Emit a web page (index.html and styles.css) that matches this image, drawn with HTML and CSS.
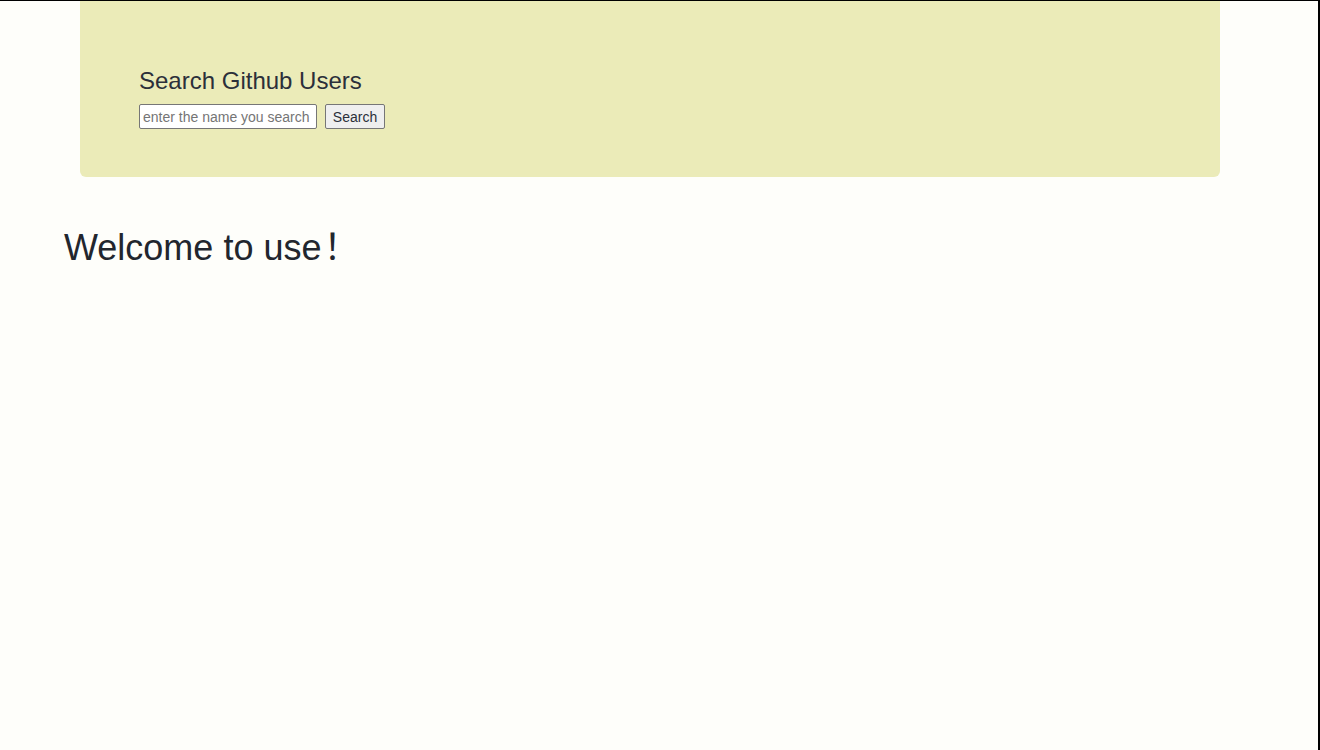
FILE: index.html
```html
<!DOCTYPE html>
<html>
<head>
<meta charset="utf-8">
<link rel="stylesheet" href="styles.css">
</head>
<body>
<div class="frame">
  <section class="jumbotron">
    <h3 class="title">Search Github Users</h3>
    <div class="search">
      <input class="search-input" type="text" placeholder="enter the name you search">
      <button class="search-btn">Search</button>
    </div>
  </section>
  <h1 class="welcome">Welcome to use<span class="bang">！</span></h1>
</div>
</body>
</html>
```
FILE: styles.css
```css
html, body {
  margin: 0;
  padding: 0;
  height: 100%;
}
body {
  background: #fefefa;
  font-family: "Liberation Sans", Arial, sans-serif;
  color: #333;
}
.frame {
  box-sizing: border-box;
  height: 750px;
  border-top: 1px solid #000;
  border-right: 2px solid #000;
}
.jumbotron {
  margin: 0 100px 0 80px;
  width: 1140px;
  box-sizing: border-box;
  background: #ebebb8;
  border-radius: 0 0 6px 6px;
  padding: 67px 60px 47px 59px;
  height: 176px;
}
.title {
  margin: 0 0 10px 0;
  font-size: 24px;
  font-weight: 400;
  line-height: 26px;
  color: #2b2f3a;
}
.search {
  display: flex;
  align-items: center;
  gap: 8px;
}
.search-input {
  box-sizing: border-box;
  width: 178px;
  height: 25px;
  margin: 0;
  padding: 1px 3px;
  border: 1px solid #767676;
  border-radius: 2px;
  background: #fff;
  font-family: "Liberation Sans", Arial, sans-serif;
  font-size: 14px;
  color: #333;
}
.search-input::placeholder {
  color: #757575;
}
.search-btn {
  box-sizing: border-box;
  height: 25px;
  width: 60px;
  margin: 0;
  padding: 0 6px;
  border: 1px solid #767676;
  border-radius: 2px;
  background: #efefef;
  font-family: "Liberation Sans", Arial, sans-serif;
  font-size: 14px;
  color: #2b2f3a;
}
.welcome {
  margin: 51px 0 0 64px;
  font-size: 36px;
  font-weight: 400;
  line-height: 40px;
  color: #22262e;
}
.bang {
  font-family: "Noto Sans CJK SC", sans-serif;
  font-feature-settings: "palt";
  line-height: 0;
  padding-left: 2px;
}
```
